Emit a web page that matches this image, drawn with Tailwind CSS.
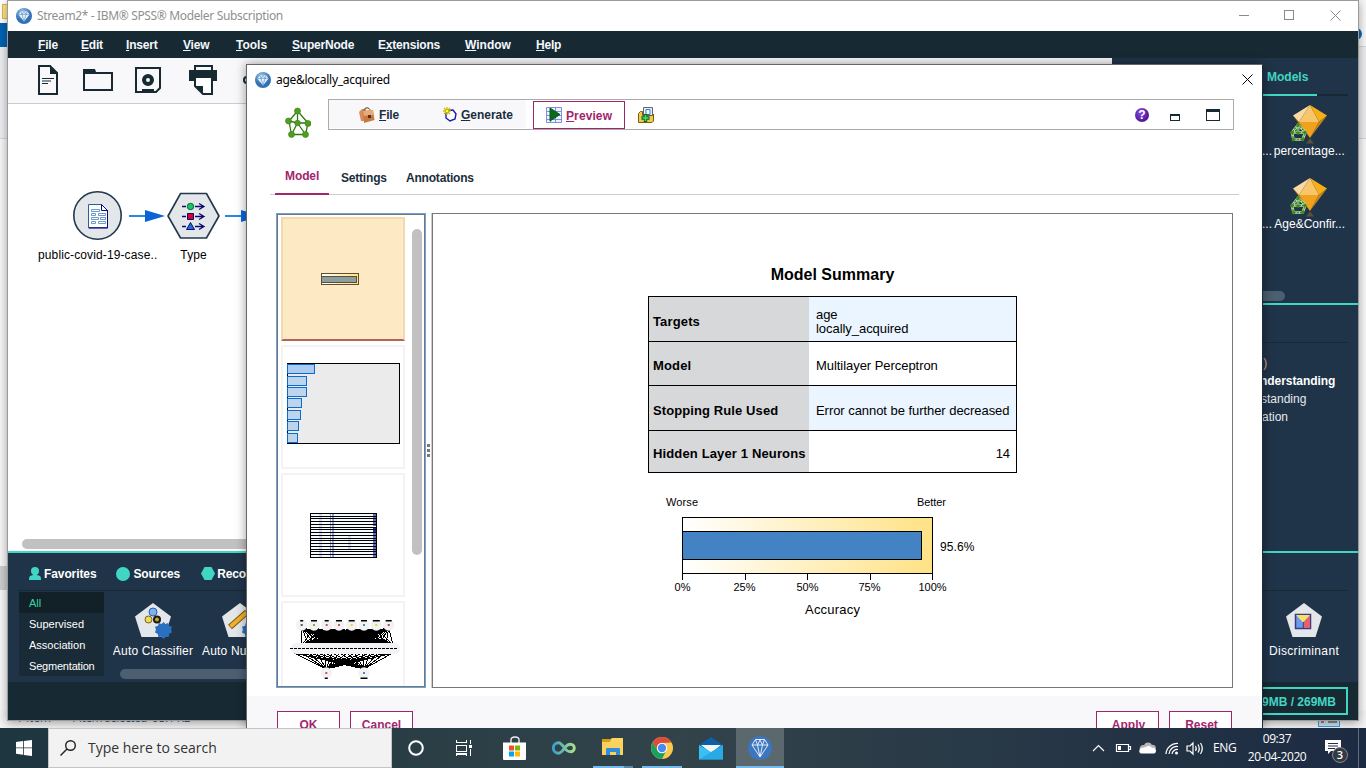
<!DOCTYPE html>
<html lang="en">
<head>
<meta charset="utf-8">
<title>IBM SPSS Modeler</title>
<script src="https://cdn.jsdelivr.net/npm/@tailwindcss/browser@4"></script>
</head>
<body class="relative w-[1366px] h-[768px] overflow-hidden bg-[#fbfbfb] font-['Liberation_Sans',sans-serif] text-xs leading-none whitespace-nowrap">

<!-- shared symbols -->
<svg class="absolute size-0">
  <defs>
    <radialGradient id="ball" cx="40%" cy="25%"><stop offset="0" stop-color="#9cc4e8"/><stop offset="1" stop-color="#3272b4"/></radialGradient>
    <linearGradient id="yl"><stop offset="0" stop-color="#fff"/><stop offset="1" stop-color="#ffe285"/></linearGradient>
    <linearGradient id="inf"><stop offset="0" stop-color="#3aa0c8"/><stop offset="1" stop-color="#a8e08a"/></linearGradient>
    <symbol id="app" viewBox="0 0 16 16">
      <circle cx="8" cy="8" r="8" fill="url(#ball)"/>
      <path d="M5 3.2h6l2.6 3.2L8 13.6 2.4 6.400z" fill="#e8f1fa"/>
      <path d="M2.400 6.400h11.200M5 3.200l1 3.200 2 7 2-7 1-3.200M6 6.400l2-3 2 3" fill="none" stroke="#5c93c8" stroke-width=".7"/>
    </symbol>
    <symbol id="net" viewBox="0 0 26 32">
      <path d="M12.500 4L4 14M12.500 4L12.500 16M12.500 4L23 16M4 14L12.500 16L23 16M4 14L6.500 27.500M12.500 16L6.500 27.500M12.500 16L20.500 27.500M23 16L20.500 27.500M6.500 27.500H20.500" fill="none" stroke="#2f7a12" stroke-width="1.300"/>
      <g fill="#4f9f1f" stroke="#397c13" stroke-width=".6"><circle cx="12.500" cy="4" r="3"/><circle cx="3.500" cy="14" r="3"/><circle cx="12.500" cy="16" r="2.800"/><circle cx="23" cy="16.500" r="3"/><circle cx="6.500" cy="27.500" r="3"/><circle cx="20.500" cy="27.500" r="3"/></g>
    </symbol>
    <symbol id="nugget" viewBox="0 0 38 40">
      <path d="M16 38.500l4-5 4 5z" fill="#5a513c"/>
      <path d="M3 10.500L20 0 9 17z" fill="#fcd9a3"/>
      <path d="M20 0L9 17h20z" fill="#f8c66a"/><path d="M20 0l17 10.500L29 17z" fill="#f7ae17"/>
      <path d="M3 10.500L9 17l11 16z" fill="#e8971c"/><path d="M9 17h20l-9 16z" fill="#f0a21e"/><path d="M37 10.500L29 17l-9 16z" fill="#c9851a"/>
      <g fill="none" stroke="#cfe6c0" stroke-width="2.600"><path d="M8 20l-6 7.500 1.500 7h9l3-7.500zM8 20v8M2 27.500h13"/></g>
      <g fill="none" stroke="#4a9424" stroke-width="1.500" stroke-dasharray="2.500 .8"><path d="M8 20l-6 7.500 1.500 7h9l3-7.500zM8 20v8M2 27.500h13"/></g>
      <g fill="#3f8a1c"><circle cx="8" cy="20" r="1.800"/><circle cx="2" cy="27.500" r="1.800"/><circle cx="8" cy="28" r="1.700"/><circle cx="15" cy="27.500" r="1.800"/><circle cx="3.500" cy="34.500" r="1.800"/><circle cx="12.500" cy="34.500" r="1.800"/></g>
    </symbol>
    <symbol id="penta" viewBox="0 0 36 36"><path d="M18 0L36 13.500 29.500 34H6.500L0 13.500z" fill="#e4e7ea"/></symbol>
    <symbol id="gear" viewBox="0 0 18 18"><path d="M9 0l2 2 3-1 .7 3L18 5l-1 3 1 3-3 1.500L14.500 16l-3-.3L9 18l-2.200-2.300L3.500 16 3 12.800 0 11l1-3-1-3 3.300-1L4 1l3 1z" fill="#2b70c0"/></symbol>
  </defs>
</svg>

<!-- explorer window showing behind -->
<div class="absolute inset-y-0 left-0 w-2 flex flex-col bg-[#f6f6f6]">
  <div class="h-[23px] pt-1 pl-0.5 bg-white"><div class="h-[15px] bg-[#ffe48a] border border-[#e3b93c]"></div></div>
  <div class="h-6 bg-[#0063b1]"></div>
  <div class="h-[92px] bg-[#eceef1] border-b border-[#d5d5d5]"></div>
  <div class="h-[427px]"></div>
  <div class="h-6 bg-[#cdcdcd]"></div>
</div>
<div class="absolute inset-y-0 right-0 w-2 flex flex-col bg-[#f7f7f7] overflow-hidden">
  <div class="h-[46px] pt-7"><div class="size-3 -ml-2 rounded-full bg-[#1068b8]"></div></div>
  <div class="h-[93px] bg-[#ececee] border-y border-[#d5d5d5]"></div>
</div>
<div class="absolute top-[710px] left-0 right-0 h-[18px] flex items-end gap-6 pl-4 bg-[#f3f3f3] text-[#3c5a78] font-['Open_Sans',sans-serif]">
  <span class="h-4 w-[30px]">1 item</span><span class="h-4 tracking-[-0.5px]">1 item selected&nbsp; 95.1 KB</span>
  <span class="ml-auto mr-[26px] mb-px w-[22px] h-4 bg-[#c8e4f8] border border-[#3aa0dc] flex items-end gap-1 px-0.5 pb-[3px]"><i class="size-1 bg-[#c66]"></i><i class="w-2.5 h-1 bg-[#888]"></i></span>
</div>

<!-- main application window -->
<main class="absolute left-[7px] top-0 w-[1352px] h-[721px] flex flex-col border border-[#9b9b9b] bg-white shadow-[0_2px_9px_rgba(0,0,0,.35)]">
  <header class="h-[30px] flex items-center pl-2 text-[#8f8f8f] font-['Noto_Sans',sans-serif]">
    <svg class="size-4 mr-[5px]"><use href="#app"/></svg>
    <span class="text-[12px] tracking-[-0.35px]">Stream2* - IBM® SPSS® Modeler Subscription</span>
    <svg class="ml-auto mr-[17px] w-[102px] h-3" fill="none" stroke="#8a8a8a" shape-rendering="crispEdges"><path d="M0 5.500h10M45.500.5h9v9h-9z"/><path d="M91.500.5l10 10M101.500.5l-10 10" shape-rendering="auto"/></svg>
  </header>
  <nav class="h-[27px] shrink-0 bg-[#172a34] text-[#f4f7fb] font-bold grid grid-cols-[43px_45px_57px_53px_56px_86px_87px_71px_60px] items-center pl-[30px] tracking-[-0.2px]">
    <span><u>F</u>ile</span><span><u>E</u>dit</span><span><u>I</u>nsert</span><span><u>V</u>iew</span><span class="tracking-normal"><u>T</u>ools</span><span><u>S</u>uperNode</span><span>E<u>x</u>tensions</span><span class="tracking-normal"><u>W</u>indow</span><span><u>H</u>elp</span>
  </nav>
  <div class="h-[493px] flex">
    <section class="w-[1104px] flex flex-col">
      <div class="h-[46px] shrink-0 bg-[#f8f8fb] border-b border-[#ccc] flex pt-[7px] pl-[30px]">
        <svg class="w-[230px] h-8" fill="none" stroke="#172a34" stroke-width="2">
          <path d="M1 1h11l7 7v21H1z"/><path d="M12 0v9h8z" fill="#172a34" stroke="none"/><path d="M4 13.500h12M4 16h9M4 18.500h6" stroke-width="1"/>
          <path d="M46 8h28v17H46z"/><path d="M45 4h12l1 3v2H45z" fill="#172a34" stroke="none"/>
          <path d="M98 3h24v20l-4 4H98z"/><circle cx="110" cy="15" r="4" stroke-width="4"/><path d="M104 24h12v2.500h-12z" fill="#172a34" stroke="none"/>
          <path d="M157 6V1h17v5"/><path d="M151 5h28v11h-4v-3h-19v3h-5z" fill="#172a34" stroke="none"/><path d="M157 12h17v17h-9l-8-8z" fill="#fff"/><path d="M157 21h8v8z" fill="#172a34" stroke="none"/>
          <circle cx="209" cy="15" r="3"/>
        </svg>
      </div>
      <div class="grow pt-[88px] pl-[30px]">
        <svg class="w-[220px] h-12 block overflow-visible">
          <circle cx="59.500" cy="23.500" r="23.700" fill="#e4e7ea" stroke="#22394c" stroke-width="1.600"/>
          <path d="M51 12.500h12l7 7v17H51z" fill="#0d1a80" opacity=".35"/>
          <path d="M50.500 12.500h13l6 6v17h-19z" fill="#fff" stroke="#2a5da8"/><path d="M63.500 12.500v6h6zM69.500 18v18h-19" fill="none" stroke="#0a0a80"/>
          <g fill="#fff" stroke="#4b80bb" stroke-width=".8"><path d="M53.500 17.500h8v2h-8zM53.500 21.500h4v2h-4zM60.500 21.500h7v2h-7zM53.500 25.500h7v2h-7zM62.500 25.500h5v2h-5zM53.500 29.500h4v2h-4zM60.500 29.500h7v2h-7z"/></g>
          <g fill="#0a64d8"><path d="M91 24h20" stroke="#2f86e0" stroke-width="2"/><path d="M107 18l20 6-20 6z"/><path d="M187 24h16" stroke="#2f86e0" stroke-width="2"/><path d="M203 18l20 6-20 6z"/></g>
          <path d="M142.500 1.500h26l12.500 22.500-12.500 22h-26L130 24z" fill="#e4e7ea" stroke="#22394c" stroke-width="1.700"/>
          <g stroke="#0a0a70" fill="none" stroke-width="1.300"><path d="M144 14.500h4M157 14.500h9M161 11.500l5 3-5 3M144 24.500h4M157 24.500h9M161 21.500l5 3-5 3M144 34.500h4M157 34.500h9M161 31.500l5 3-5 3"/></g>
          <circle cx="152.500" cy="14.500" r="3.200" fill="#1ec46a" stroke="#063"/><path d="M149.500 21.500h6v6h-6z" fill="#d60036" stroke="#0a0a60"/><path d="M152.500 30.500l4 7h-8z" fill="#1d6fd8" stroke="#0a0a60"/>
        </svg>
        <div class="flex gap-[23px] pt-[9px] text-black"><span class="tracking-[0.12px]">public-covid-19-case..</span><span class="tracking-[0.1px]">Type</span></div>
      </div>
      <div class="h-[10px] mb-[2px] ml-[14px] mr-4 rounded-full bg-[#c1c1c1]"></div>
    </section>
    <aside class="grow bg-[#203449] flex flex-col text-white">
      <div class="h-[38px] mr-[10px] border-b-2 border-[#172a34] flex"><span class="h-[38px] w-[205px] border-b-2 border-[#41d6c3] pl-[155px] pt-[13px] font-bold text-[#41d6c3]">Models</span></div>
      <div class="h-[73px] pt-[9px] pl-[178px]"><svg class="w-[38px] h-10"><use href="#nugget"/></svg><div class="-ml-[28px] flex justify-between w-[83px]"><span>...</span><span class="tracking-[0.1px]">percentage...</span></div></div>
      <div class="h-[73px] pt-[9px] pl-[178px]"><svg class="w-[38px] h-10"><use href="#nugget"/></svg><div class="-ml-[28px] flex justify-between w-[83px]"><span>...</span><span>Age&amp;Confir...</span></div></div>
      <div class="mt-[49px] h-[10px] w-[173px] bg-[#4b5f70] rounded-full"></div>
      <div class="mt-[2px] h-[2px] bg-[#41d6c3]"></div>
      <div class="h-[38px] mr-[10px] border-b border-[#172a34]"></div>
      <div class="pt-[11px] pl-[148px] leading-[18px]"><div class="text-[#e5a58e]">&nbsp;)</div><div class="font-bold tracking-[-0.05px]">nderstanding</div><div class="text-[#e6e9ec]">&#8202;standing</div><div class="text-[#e6e9ec] pl-0.5">ation</div></div>
    </aside>
  </div>
  <section class="h-[131px] border-t-2 border-[#41d6c3] bg-[#203449] text-white flex flex-col pl-[10px] pr-[10px]">
    <div class="h-[38px] shrink-0 border-b border-[#172a34] flex items-center pl-[11px] pt-[4px] font-bold tracking-[-0.1px]">
      <svg class="w-3 h-[13px] mr-[3px]" fill="#41d6c3"><circle cx="6" cy="4" r="4"/><path d="M4 6h4v2l3 1q1 .5 1 4H0q0-3.500 1-4l3-1z"/></svg>Favorites
      <svg class="size-[14px] ml-5 mr-[3px]"><circle cx="7" cy="7" r="7" fill="#41d6c3"/></svg>Sources
      <svg class="w-[14px] h-[13px] ml-[21px] mr-[2px]"><path d="M3.500 0h7L14 6.500 10.500 13h-7L0 6.500z" fill="#41d6c3"/></svg>Reco
    </div>
    <div class="grow flex pt-px">
      <ul class="w-[85px] h-[84px] ml-px bg-[#192b36] text-[11px] leading-[23px] *:pl-[10px] *:h-[21px]"><li class="bg-[#122028] text-[#36d6a2]">All</li><li>Supervised</li><li>Association</li><li class="tracking-[-0.2px]">Segmentation</li></ul>
      <div class="ml-[9px] w-[150px] overflow-hidden pt-[11px]">
        <div class="flex gap-[9px] tracking-[0.2px]">
          <div class="w-[80px] flex flex-col items-center gap-[6px]"><svg class="w-9 h-9 overflow-visible"><use href="#penta"/><circle cx="18" cy="9" r="4" fill="#7fb2ec" stroke="#2a5db0"/><circle cx="13.500" cy="16.500" r="3.500" fill="#f2d95a" stroke="#75641a"/><circle cx="22" cy="16.500" r="4" fill="#1a1a1a"/><circle cx="22" cy="16.500" r="2" fill="#c8a820"/><use href="#gear" x="20" y="19" width="17" height="17"/></svg><span>Auto Classifier</span></div>
          <div class="w-[75px] shrink-0 flex flex-col items-center gap-[6px]"><svg class="w-9 h-9"><use href="#penta"/><path d="M8 24L25 9" stroke="#7d5a10" stroke-width="6"/><path d="M8.500 23.500L24.500 9.500" stroke="#efb02e" stroke-width="4"/><use href="#gear" x="20" y="19" width="17" height="17"/></svg><span>Auto Numeric</span></div>
        </div>
        <div class="ml-[7px] mt-[12px] h-[10px] w-[240px] rounded-full bg-[#4b5f70]"></div>
      </div>
      <div class="ml-auto mr-[8px] w-[72px] flex flex-col items-center gap-[6px] pt-[11px] tracking-[0.35px]"><svg class="w-9 h-9"><use href="#penta"/><path d="M9.500 11.500h15v14h-15z" fill="#6b9ae8" stroke="#3a3a88" stroke-width="1.500"/><path d="M17.500 19l6.500-6.500V25h-6.500z" fill="#e8606a"/><path d="M10 12h14l-7 7.500z" fill="#f5e06a"/><path d="M17.300 19v6" stroke="#3a3a88"/></svg><span>Discriminant</span></div>
    </div>
  </section>
  <footer class="h-[38px] bg-[#172a34] flex justify-end pr-[10px] pt-[5px]"><div class="w-[150px] h-7 border-2 border-[#41d6c3] flex items-center justify-end pr-[10px] pt-px font-bold text-[#41d6c3]">189MB / 269MB</div></footer>
</main>

<!-- model nugget dialog -->
<div class="absolute left-[246px] top-[64px] w-[1017px] h-[664px] border-t border-x border-l-[#666] border-t-[#666] border-r-[#1a2c3a] bg-white flex flex-col overflow-hidden text-[#1a2e3e] shadow-[0_0_10px_rgba(0,0,0,.4)]">
  <header class="h-[29px] shrink-0 flex items-center pl-2 text-black font-['Noto_Sans',sans-serif]">
    <svg class="size-4 mr-[5px]"><use href="#app"/></svg><span class="tracking-[-0.28px]">age&amp;locally_acquired</span>
    <svg class="ml-auto mr-[9px] size-[11px]" stroke="#000"><path d="M.5.5l10 10M10.500.5l-10 10"/></svg>
  </header>
  <div class="h-[70px] shrink-0 flex pl-[38px] pt-[5px]">
    <svg class="w-[26px] h-8 mt-[8px] mr-[17px]"><use href="#net"/></svg>
    <div class="w-[906px] h-[31px] border border-[#ababab] flex font-bold">
      <div class="w-[197px] h-[28px] bg-[#f8f8fb] flex items-center pt-px pl-[30px]">
        <svg class="w-4 h-4 mr-1"><path d="M0 5l3-3h4v12H2z" fill="#d98b5c"/><path d="M5 3.500C5 0 11 0 11 3.500" fill="none" stroke="#5a3010"/><path d="M4 4l10-1 1.500 10L5 16z" fill="#c47a42"/><path d="M4 4l10-1 .5 5L5 9z" fill="#e6aa78"/><path d="M9 8h3v3H9z" fill="#5b2c0b"/></svg><span class="tracking-[-0.2px]"><u>F</u>ile</span>
        <svg class="w-[14px] h-[15px] ml-[44px] mr-[4px] overflow-visible"><path d="M5 3.500L10 3l3 4-1 5-5 2-4-3V7z" fill="#fff" stroke="#1a1ab0" stroke-width="1.400"/><path d="M4 0v8M0 4h8M1 1l6 6M7 1L1 7" stroke="#c9bc00" stroke-width="1.300"/><path d="M3 3h2v2H3z" fill="#ff3"/></svg><span><u>G</u>enerate</span>
      </div>
      <div class="ml-[7px] mt-px w-[92px] h-7 border border-[#a2256c] text-[#a2256c] bg-white flex items-center pl-3">
        <svg class="size-4 mr-[4px]"><path d="M.5.500h15v15H.5zM0 4.500h16M0 8.500h16M0 12.500h16M4.500 0v16M9.500 0v16" fill="#eef1ff" stroke="#7f92d8"/><path d="M4 1l10 6.500L4 14z" fill="#0b6b10" stroke="#053"/></svg><span class="pt-px tracking-[0.1px]"><u>P</u>review</span>
      </div>
      <svg class="ml-[13px] mt-[7px] w-4 h-4"><path d="M5.500.5h9v10h-9z" fill="#e6f1fd" stroke="#666"/><path d="M8 2.500h4v5H8z" fill="#fff" stroke="#2b7cd8"/><path d="M.5 6.500l2-2h2v4h10l1-1.500v7l-1.500 1.500H.5z" fill="#f2c84d" stroke="#7c5e12"/><path d="M7.500 7v8M3.500 11h8" stroke="#063" stroke-width="3.400"/><path d="M7.500 8v6M4.500 11h6" stroke="#4be04b" stroke-width="1.600"/></svg>
      <div class="ml-auto mt-[8px] size-[14px] rounded-full bg-radial-[at_40%_30%] from-[#8a4be0] to-[#38007a] text-white text-[12px] leading-[14px] text-center">?</div>
      <div class="ml-[21px] mt-[14px] w-[10px] h-[7px] border border-t-2 border-[#172a34]"></div>
      <div class="ml-[26px] mr-[13px] mt-[9px] w-[14px] h-[12px] border border-t-[3px] border-[#172a34]"></div>
    </div>
  </div>
  <div class="h-[31px] shrink-0 ml-[23px] mr-[23px] border-b border-[#ccc] flex pl-[5px] font-bold">
    <span class="w-[54px] h-[31px] border-b-2 border-[#a2256c] text-[#a2256c] pl-[10px] pt-[6px] tracking-[-0.1px]">Model</span><span class="w-[65px] pl-[12px] pt-[8px] tracking-[-0.2px]">Settings</span><span class="pl-[12px] pt-[8px] tracking-[-0.2px]">Annotations</span>
  </div>
  <div class="h-[475px] shrink-0 mt-[18px] flex pl-[29px]">
    <div class="w-[150px] border border-[#6ca3dc]">
      <div class="h-full border border-[#777] flex overflow-hidden pl-[3px] pt-[2px]">
        <div class="flex flex-col gap-1 w-[124px] *:shrink-0">
          <div class="h-[124px] bg-[#fdeac4] border-2 border-[#efdab2] border-b-[#b4625c] flex"><svg class="m-auto size-[120px]" shape-rendering="crispEdges"><path d="M38.500 54.500h37v11h-37z" fill="url(#yl)" stroke="#5d5030"/><path d="M38.500 57.500h35v6h-35z" fill="#8a9ea4" stroke="#5d5030"/></svg></div>
          <div class="h-[124px] border-2 border-[#f3f3f3]"><svg class="size-[120px]" shape-rendering="crispEdges"><path d="M4.500 16.500h112v80H4.500z" fill="#ebebeb" stroke="#000"/><g fill="#bcd4ec" stroke="#0a6cd0"><path d="M4.500 17.500h27v9h-27z" fill="#aecbf0"/><path d="M4.500 29.500h19v9h-19zM4.500 40.500h19v9h-19zM4.500 51.500h14v9h-14zM4.500 63.500h13v9h-13zM4.500 74.500h11v9h-11zM4.500 86.500h10v9h-10z"/></g></svg></div>
          <div class="h-[124px] border-2 border-[#f3f3f3]"><svg class="size-[120px]" shape-rendering="crispEdges"><path d="M27.500 38.500h66v44h-66z" fill="#f4fbff" stroke="#000"/><path d="M36 39h3v43h-3zM65 60h3v14h-3z" fill="#d9daf2"/><path d="M47 39h1v43h-1zM49 39h2v43h-2z" fill="#9aa3d8"/><path d="M90 39h3v12h-3zM90 55h3v27h-3z" fill="#5e6cba"/><path d="M90 53h3v4h-3z" fill="#1c2a90"/><path d="M27 41.500h67M27 43.500h67M27 46.500h67M27 49.500h67M27 52.500h67M27 54.500h67M27 57.500h67M27 60.500h67M27 63.500h67M27 65.500h67M27 68.500h67M27 71.500h67M27 74.500h67M27 76.500h67M27 79.500h67" stroke="#000"/></svg></div>
          <div class="h-[124px] border-2 border-[#f3f3f3]"><svg id="network" class="size-[120px]"></svg></div>
        </div>
        <div class="ml-[7px] mt-[12px] w-[10px] h-[326px] rounded-full bg-[#c1c1c1]"></div>
      </div>
    </div>
    <div class="w-[6px] flex flex-col justify-center items-end pr-px gap-[2px] border-r border-[#ccc]"><i class="size-[3px] bg-[#777]"></i><i class="size-[3px] bg-[#777]"></i><i class="size-[3px] bg-[#777]"></i></div>
    <div class="w-[801px] border border-[#777] flex flex-col items-center text-black pt-[53px]">
      <h1 class="text-base leading-4 font-bold">Model Summary</h1>
      <div class="mt-[13px] w-[369px] h-[177px] border border-black grid grid-cols-[160px_1fr] grid-rows-[45px_44px_45px_1fr] text-[13px] tracking-[-0.05px]">
        <div class="bg-[#d7d8da] border-b border-black flex items-center pl-1 pt-1 font-bold tracking-[0.14px]">Targets</div><div class="bg-[#eaf5ff] border-b border-black pl-[7px] pt-[11px] leading-[14px]">age<br>locally_acquired</div>
        <div class="bg-[#d7d8da] border-b border-black flex items-center pl-1 pt-1 font-bold tracking-[0.14px]">Model</div><div class="border-b border-black flex items-center pl-[7px] pt-1">Multilayer Perceptron</div>
        <div class="bg-[#d7d8da] border-b border-black flex items-center pl-1 pt-1 font-bold tracking-[0.1px]">Stopping Rule Used</div><div class="bg-[#eaf5ff] border-b border-black flex items-center pl-[7px] pt-1">Error cannot be further decreased</div>
        <div class="bg-[#d7d8da] flex items-center pl-1 pt-1 font-bold tracking-[0.14px]">Hidden Layer 1 Neurons</div><div class="flex items-center justify-end pr-[6px] pt-1">14</div>
      </div>
      <svg class="w-[369px] h-[140px] mt-[10px]" font-size="11" shape-rendering="crispEdges">
        <text x="18" y="23" textLength="32">Worse</text><text x="269" y="23" textLength="29">Better</text>
        <path d="M34.500 34.500h250v56h-250z" fill="url(#yl)" stroke="#000"/>
        <path d="M34.500 48.500h239v28h-239z" fill="#4383c4" stroke="#000"/>
        <path d="M34.500 90v7M97.500 90v7M159.500 90v7M222.500 90v7M284.500 90v7" stroke="#000"/>
        <g text-anchor="middle"><text x="34.500" y="108">0%</text><text x="96.500" y="108">25%</text><text x="159.500" y="108">50%</text><text x="221.500" y="108">75%</text><text x="284.500" y="108" textLength="28">100%</text></g>
        <text x="292" y="68" font-size="12" textLength="34.500">95.6%</text><text x="157" y="131" font-size="13" textLength="55">Accuracy</text>
      </svg>
    </div>
  </div>
  <footer class="mt-[8px] grow bg-[#f8f8fb] flex gap-[10px] pl-[30px] pr-[30px] pt-[15px] font-bold text-[#a2256c] *:w-[63px] *:h-7 *:shrink-0 *:bg-white *:border *:border-[#a2256c] *:text-center *:pt-[7px]">
    <div>OK</div><div>Cancel</div><div class="ml-auto pl-0.5">Apply</div><div class="pl-0.5">Reset</div>
  </footer>
</div>

<!-- taskbar -->
<div class="absolute left-0 top-[728px] w-full h-10 flex bg-linear-to-r from-[#1e3640] via-[#32434a] via-50% to-[#1c2b42] text-white font-['Open_Sans',sans-serif]">
  <div class="w-12 flex items-center justify-center"><svg class="size-4" fill="#fff"><path d="M0 2l7-1v6.500H0zM7.800.9L16 0v7.500H7.800zM0 8.300h7v6.500l-7-1zM7.800 8.300H16V16l-8.200-1z"/></svg></div>
  <div class="w-[344px] bg-[#f2f2f2] border border-[#c4c4c4] flex items-center pl-[11px] text-[#333] text-[14px]"><svg class="size-4 mr-[12px]" fill="none" stroke="#222" stroke-width="1.400"><circle cx="10.500" cy="5.500" r="4.800"/><path d="M7 9L.5 15.500"/></svg><span>Type here to search</span></div>
  <div class="w-12 flex items-center justify-center"><svg class="size-4"><circle cx="8" cy="8" r="6.800" fill="none" stroke="#fff" stroke-width="2"/></svg></div>
  <div class="w-12 flex items-center justify-center"><svg class="size-4" fill="none" stroke="#fff" stroke-width="1.200" shape-rendering="crispEdges"><path d="M.5 0v2.500h10V0M.5 5.500h10v6H.5zM.5 16v-2h10v2M14.500 0v4M14.500 9v7"/><path d="M13 5h3v3h-3z" fill="#fff" stroke="none"/></svg></div>
  <div class="w-[52px] flex items-center justify-center"><svg class="w-[23px] h-6"><path d="M8 7V4c0-4 8-4 8 0v3" fill="none" stroke="#eee" stroke-width="1.400"/><path d="M0 6.500h23V23q0 1-1 1H1q-1 0-1-1z" fill="#fff"/><path d="M6 9.500h5v5H6z" fill="#f25022"/><path d="M12 9.500h5v5h-5z" fill="#7fba00"/><path d="M6 15.500h5v5H6z" fill="#00a4ef"/><path d="M12 15.500h5v5h-5z" fill="#ffb900"/></svg></div>
  <div class="w-[48px] flex items-center justify-center"><svg class="w-6 h-[14px]"><path d="M12.500 7C10 3.500 8.500 1.800 6.500 1.800a5.200 5.200 0 000 10.400C9 12.200 11 9 12.500 7S16 3.200 18.500 3.200a3.800 3.800 0 010 7.600C16 10.800 14 9 12.500 7z" fill="none" stroke="url(#inf)" stroke-width="2.900"/></svg></div>
  <div class="w-[49px] flex flex-col items-center pt-[9px]"><svg class="w-[22px] h-[21px]"><path d="M0 2h9l1-1h11v17H0z" fill="#fcd462"/><path d="M0 2h9l-1 3H0z" fill="#dd9a12"/><path d="M0 6h21v12H0z" fill="#fcd05c"/><path d="M4 18v-6q0-1 1-1h12q1 0 1 1v6h-4v-3H8v3z" fill="#2f8fdd"/></svg><div class="mt-auto h-0.5 w-10 bg-linear-to-r from-[#76b9ed] from-78% to-[#5a87ad] to-78%"></div></div>
  <div class="w-[49px] flex flex-col items-center pt-[9px]"><svg class="size-[22px]" viewBox="0 0 22 22"><circle cx="11" cy="11" r="11" fill="#fbc94c"/><path d="M1.500 5.500A11 11 0 0120.500 5.500L11 6a5 5 0 00-4.300 7.500z" fill="#de4b3a"/><path d="M1.500 5.500A11 11 0 0011 22l4.300-8.500a5 5 0 01-8.600 0z" fill="#1ba15e"/><circle cx="11" cy="11" r="5.200" fill="#fff"/><circle cx="11" cy="11" r="4.200" fill="#4a8af4"/></svg><div class="mt-auto h-0.5 w-10 bg-[#76b9ed]"></div></div>
  <div class="w-[50px] flex items-center justify-center"><svg class="w-6 h-[23px]"><path d="M0 8l12-8 12 8v5H0z" fill="#0f5ea8"/><path d="M2 8h20l-10 8z" fill="#f4f4f4"/><path d="M0 8l12 7 12-7v14.500H0z" fill="#35c1f1"/><path d="M3 8h18l-9 6z" fill="#f4f4f4"/><path d="M24 8L0 22.500h24z" fill="#2199e0" opacity=".6"/></svg></div>
  <div class="w-12 bg-[#5b686e] border-b-2 border-[#76b9ed] flex items-center justify-center pt-0.5"><svg class="size-6"><circle cx="12" cy="12" r="12" fill="#3d76c0"/><path d="M7.500 3.500h9L20 9l-8 12L4 9zM4 9h16M7.500 3.500l2 5.500L12 21l2.500-12 2-5.500M9.500 9L12 4l2.500 5" fill="none" stroke="#e4eefa" stroke-width="1"/></svg></div>
  <div class="ml-auto flex items-center">
    <svg class="w-[120px] h-5 mr-[3px]" fill="none" stroke="#fff" stroke-width="1.200">
      <path d="M3 13l5.500-5.500L14 13"/><path d="M26.500 6.500h12v7h-12zM39 8.500h1.500v3H39"/><path d="M28 8h3v4h-3z" fill="#fff" stroke="none"/>
      <path d="M50 12a4 3.500 0 014-5 4.500 4.500 0 018 0 3 3 0 013 5z" fill="#b8b8b8" stroke="none"/><path d="M50 15a3 3 0 012-5l4-1a4 4 0 016 1 2.800 2.800 0 012 5.500H51z" fill="#fff" stroke="none"/>
      <path d="M76 16A11 11 0 0188 5.500M79 16A8 8 0 0188 8.500M82 16a5 5 0 016-4.500"/><circle cx="86.500" cy="15" r="1.500" fill="#fff" stroke="none"/>
      <path d="M97 8h3l3-3v11l-3-3h-3zM105.500 8q1.500 2.500 0 5M108 6.500q2.500 4 0 8M110.500 5q3.500 5.500 0 11"/>
    </svg>
    <span class="text-[12px] w-[24px] tracking-[-0.3px]">ENG</span>
    <div class="ml-[7px] w-[66px] text-center text-[12px] leading-[18px] tracking-[-0.4px]">09:37<br>20-04-2020</div>
    <div class="relative ml-[15px] mr-[9px] mt-[6px] w-[24px] h-6"><svg class="w-4 h-4"><path d="M0 1h16v11H6l-3 3v-3H0z" fill="#fff"/><path d="M3 4.500h10M3 7h10M3 9.500h7" stroke="#22304a"/></svg><span class="absolute left-[7px] top-[8px] size-4 rounded-full bg-[#333a44] border border-[#888] text-[11px] leading-[14px] text-center font-semibold">3</span></div>
    <div class="w-[8px] h-10 border-l border-[#5d6a7c]"></div>
  </div>
</div>

<script>
  // Draws the perceptron thumbnail: input layer, hidden layer, outputs
  const ins = [18.700, 31, 43.700, 56, 68.700, 81, 93.300, 105.700];
  const hid = Array.from({length: 14}, (_, i) => 11 + i * 7.600);
  const outs = [43.300, 81];
  let d = '';
  for (const a of ins) for (const b of hid) d += `M${a} 25L${19 + (b - 11) * .92} 42`;
  for (const a of hid) for (const b of outs) d += `M${a} 50L${b} 66`;
  const node = (x, y, c) => `<circle cx="${x}" cy="${y}" r="5.700" fill="#f2f2f4"/><rect x="${x - 1}" y="${y - 1}" width="2" height="2" fill="${c}"/>`;
  const label = (x, y, w) => `<rect x="${x - w / 2}" y="${y}" width="${w}" height="1.500"/>`;
  const col = ['#555', '#8a3', '#c55', '#c55', '#dd2', '#58a', '#dd2', '#a46'];
  const lw = [3, 6, 4, 6, 6, 6, 7, 6];
  document.getElementById('network').innerHTML =
    `<path d="${d}" stroke="#000" stroke-width="1" shape-rendering="crispEdges"/>` +
    `<rect x="8" y="40" width="109" height="11" rx="5.500" fill="#f2f2f4"/>` +
    `<path d="M7 45.500h107" stroke="#000" stroke-width="1" stroke-dasharray="3 1"/>` +
    ins.map((x, i) => node(x, 22, col[i]) + label(x, 17, lw[i])).join('') +
    outs.map((x, i) => node(x, 70, ['#c55', '#58a'][i]) + label(x, 74.500, [3, 7][i])).join('');
</script>
</body>
</html>
